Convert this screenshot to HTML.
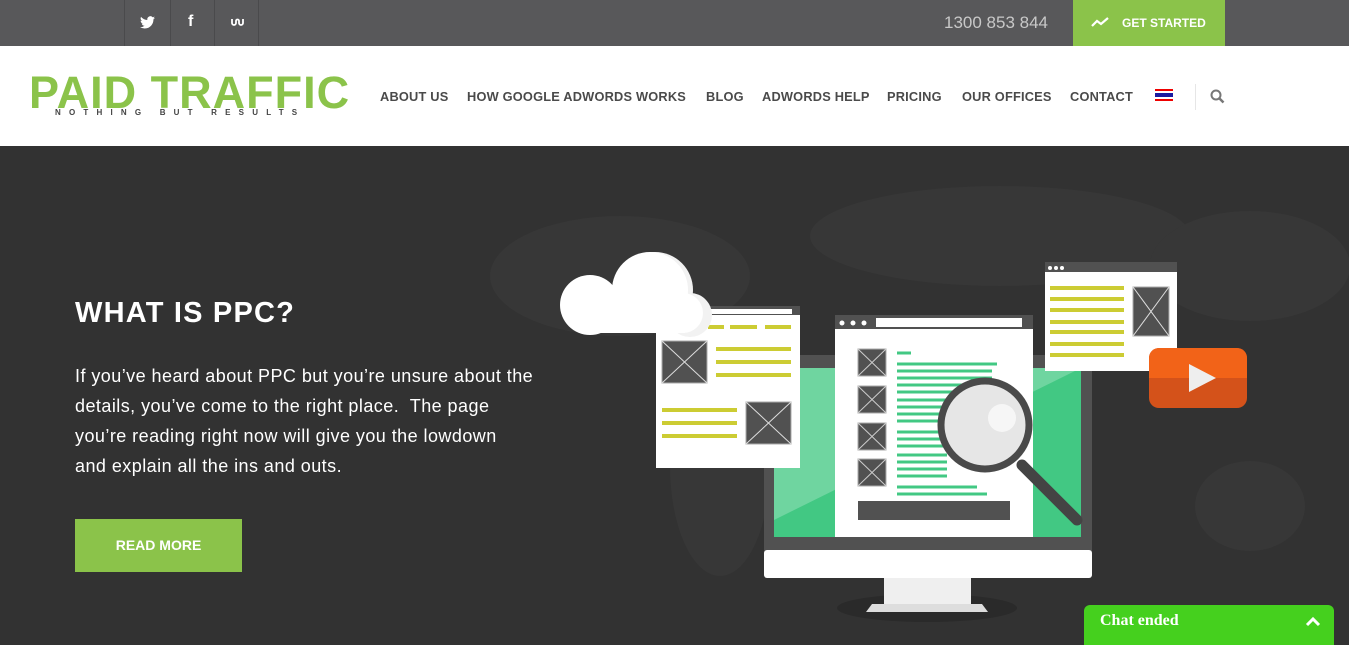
<!DOCTYPE html>
<html><head><meta charset="utf-8"><style>
*{margin:0;padding:0;box-sizing:border-box}
body{width:1349px;height:638px;overflow:hidden;background:#323232;font-family:"Liberation Sans",sans-serif;position:relative}
.top{position:absolute;left:0;top:0;width:1349px;height:46px;background:#58585a}
.soc{position:absolute;top:0;height:46px;border-left:1px solid #4a4a4c}
.hdr{position:absolute;left:0;top:46px;width:1349px;height:100px;background:#fff}
.nav{position:absolute;top:89px;font-size:12.8px;font-weight:bold;color:#4a4a4a;letter-spacing:.2px}
.abs{position:absolute}
</style></head><body>
<div class="top">
 <div class="soc" style="left:124px;width:46px"></div>
 <div class="soc" style="left:170px;width:44px"></div>
 <div class="soc" style="left:214px;width:45px;border-right:1px solid #4a4a4c"></div>
 <svg class="abs" style="left:140px;top:16px" width="15" height="13" viewBox="0 0 24 20"><path fill="#fff" d="M24 2.4a10 10 0 0 1-2.8.8A5 5 0 0 0 23.3.4a10 10 0 0 1-3.1 1.2A4.9 4.9 0 0 0 11.8 6 14 14 0 0 1 1.7.9a4.9 4.9 0 0 0 1.5 6.6A4.9 4.9 0 0 1 1 6.9a4.9 4.9 0 0 0 3.9 4.8 5 5 0 0 1-2.2.1 4.9 4.9 0 0 0 4.6 3.4A9.9 9.9 0 0 1 0 17.3 14 14 0 0 0 7.5 19.5c9.1 0 14-7.5 14-14v-.6A10 10 0 0 0 24 2.4z"/></svg>
 <div class="abs" style="left:188px;top:13px;color:#fff;font-weight:bold;font-size:16px">f</div>
 <svg class="abs" style="left:231px;top:18px" width="13" height="9" viewBox="0 0 13 9"><path d="M1 1v4a2 2 0 0 0 4 0V3a1.5 1.5 0 0 1 3 0v2a2 2 0 0 0 4 0V1" stroke="#fff" stroke-width="1.8" fill="none"/></svg>
 <div class="abs" style="left:944px;top:13px;color:#c8c8c8;font-size:17px">1300 853 844</div>
 <div class="abs" style="left:1073px;top:0;width:152px;height:46px;background:#8bc34a"></div>
 <svg class="abs" style="left:1091px;top:16px" width="19" height="12" viewBox="0 0 19 12"><path d="M1 10l5-5 4 3 7-6" stroke="#fff" stroke-width="2.2" fill="none"/></svg>
 <div class="abs" style="left:1122px;top:16px;color:#fff;font-size:12px;font-weight:bold">GET STARTED</div>
</div>
<div class="hdr"></div>
<div class="abs" style="left:29px;top:70px;color:#8bc34a;font-size:45px;line-height:45px;font-weight:bold;letter-spacing:1px;white-space:nowrap">PAID TRAFFIC</div>
<div class="abs" style="left:55px;top:108px;color:#444;font-size:8px;font-weight:bold;letter-spacing:8.2px;white-space:nowrap">NOTHING BUT RESULTS</div>
<div class="nav" style="left:380px">ABOUT US</div>
<div class="nav" style="left:467px">HOW GOOGLE ADWORDS WORKS</div>
<div class="nav" style="left:706px">BLOG</div>
<div class="nav" style="left:762px">ADWORDS HELP</div>
<div class="nav" style="left:887px">PRICING</div>
<div class="nav" style="left:962px">OUR OFFICES</div>
<div class="nav" style="left:1070px">CONTACT</div>
<div class="abs" style="left:1155px;top:89px;width:18px;height:12px;background:linear-gradient(#e00 0 17%,#fff 17% 33%,#1a1aa0 33% 67%,#fff 67% 83%,#e00 83%)"></div>
<div class="abs" style="left:1195px;top:84px;width:1px;height:26px;background:#e6e6e6"></div>
<svg class="abs" style="left:1210px;top:89px" width="15" height="15" viewBox="0 0 15 15"><circle cx="6" cy="6" r="4.5" stroke="#777" stroke-width="2" fill="none"/><path d="M9.5 9.5l4 4" stroke="#777" stroke-width="2.5"/></svg>

<svg class="abs" style="left:0;top:146px" width="1349" height="492">
 <g fill="#373737"><ellipse cx="620" cy="130" rx="130" ry="60"/><ellipse cx="720" cy="320" rx="50" ry="110"/><ellipse cx="1000" cy="90" rx="190" ry="50"/><ellipse cx="1250" cy="120" rx="100" ry="55"/><ellipse cx="1250" cy="360" rx="55" ry="45"/></g>
 <ellipse cx="927" cy="462" rx="90" ry="14" fill="#2a2a2a"/>
</svg>

<div class="abs" style="left:75px;top:297px;color:#fff;font-size:29px;font-weight:bold;letter-spacing:1.2px">WHAT IS PPC?</div>
<div class="abs" style="left:75px;top:361px;width:462px;color:#fff;font-size:18px;letter-spacing:.45px;line-height:30px">If you’ve heard about PPC but you’re unsure about the details, you’ve come to the right place.&nbsp; The page you’re reading right now will give you the lowdown<br>and explain all the ins and outs.</div>
<div class="abs" style="left:75px;top:519px;width:167px;height:53px;background:#8bc34a;color:#fff;font-size:14px;font-weight:bold;text-align:center;line-height:53px">READ MORE</div>

<svg class="abs" style="left:0;top:0" width="1349" height="638">
 <rect x="764" y="355" width="328" height="223" rx="4" fill="#515151"/>
 <rect x="774" y="368" width="307" height="169" fill="#42c883"/>
 <polygon points="774,368 1081,368 774,520" fill="#6fd5a0"/>
 <rect x="764" y="550" width="328" height="28" rx="3" fill="#fff"/>
 <rect x="884" y="578" width="87" height="27" fill="#efefef"/>
 <polygon points="866,612 988,612 982,604 872,604" fill="#ddd"/>
 <rect x="835" y="315" width="198" height="222" fill="#fff"/>
 <rect x="835" y="315" width="198" height="14" fill="#515151"/>
 <circle cx="842" cy="323" r="2.5" fill="#fff"/><circle cx="853" cy="323" r="2.5" fill="#fff"/><circle cx="864" cy="323" r="2.5" fill="#fff"/>
 <rect x="876" y="318" width="146" height="9" fill="#fff"/>
 <g fill="#515151" stroke="#aaa"><rect x="858" y="349" width="28" height="27"/><rect x="858" y="386" width="28" height="27"/><rect x="858" y="423" width="28" height="27"/><rect x="858" y="459" width="28" height="27"/></g>
 <g stroke="#ccc" stroke-width="1"><path d="M858 349l28 27M886 349l-28 27M858 386l28 27M886 386l-28 27M858 423l28 27M886 423l-28 27M858 459l28 27M886 459l-28 27"/></g>
 <g stroke="#42c883" stroke-width="3"><path d="M897 353h14M897 364h100M897 371h95M897 378h95M897 385h70M897 392h95M897 400h80M897 407h60M897 414h70M897 421h60M897 432h70M897 439h60M897 446h60M897 455h50M897 462h50M897 469h50M897 476h50M897 487h80M897 494h90M897 503h75M897 511h35"/></g>
 <rect x="858" y="501" width="152" height="19" fill="#515151"/>
 <path d="M1022 465l55 55" stroke="#444" stroke-width="11" stroke-linecap="round"/>
 <circle cx="985" cy="425" r="44" fill="#e6e6e6" stroke="#4a4a4a" stroke-width="7"/>
 <ellipse cx="1002" cy="418" rx="14" ry="14" fill="#f6f6f6"/>
 <rect x="656" y="306" width="144" height="162" fill="#fff"/>
 <rect x="700" y="306" width="100" height="9" fill="#515151"/><rect x="702" y="309" width="90" height="5" fill="#fff"/>
 <g stroke="#cccc33" stroke-width="4"><path d="M708 327h16M730 327h27M765 327h26M716 349h75M716 362h75M716 375h75M662 410h75M662 423h75M662 436h75"/></g>
 <g fill="#515151" stroke="#aaa"><rect x="662" y="341" width="45" height="42"/><rect x="746" y="402" width="45" height="42"/></g>
 <path d="M662 341l45 42M707 341l-45 42M746 402l45 42M791 402l-45 42" stroke="#ddd"/>
 <g fill="#f2f2f2"><circle cx="655" cy="290" r="38"/><circle cx="690" cy="315" r="22"/></g>
 <g fill="#fff"><circle cx="650" cy="290" r="38"/><circle cx="590" cy="305" r="30"/><circle cx="683" cy="313" r="20"/><rect x="590" y="300" width="95" height="33"/></g>
 <rect x="1045" y="262" width="132" height="109" fill="#fff"/>
 <rect x="1045" y="262" width="132" height="10" fill="#515151"/>
 <circle cx="1050" cy="268" r="2" fill="#fff"/><circle cx="1056" cy="268" r="2" fill="#fff"/><circle cx="1062" cy="268" r="2" fill="#fff"/>
 <g stroke="#cccc33" stroke-width="4"><path d="M1050 288h74M1050 299h74M1050 310h74M1050 322h74M1050 332h74M1050 344h74M1050 355h74"/></g>
 <rect x="1133" y="287" width="36" height="49" fill="#515151" stroke="#aaa"/>
 <path d="M1133 287l36 49M1169 287l-36 49" stroke="#ddd"/>
 <rect x="1149" y="348" width="98" height="60" rx="10" fill="#d4521a"/>
 <path d="M1159 348h78a10 10 0 0 1 10 10v20h-98v-20a10 10 0 0 1 10-10z" fill="#f26318"/>
 <polygon points="1189,364 1216,378 1189,392" fill="#eee"/>
</svg>
<div class="abs" style="left:1084px;top:605px;width:250px;height:40px;background:#45d01e;border-radius:6px 6px 0 0"></div>
<div class="abs" style="left:1100px;top:612px;color:#fff;font-family:'Liberation Serif',serif;font-weight:bold;font-size:16px">Chat ended</div>
<svg class="abs" style="left:1305px;top:616px" width="16" height="11"><path d="M2 9l6-6 6 6" stroke="#fff" stroke-width="3" fill="none"/></svg>
</body></html>
